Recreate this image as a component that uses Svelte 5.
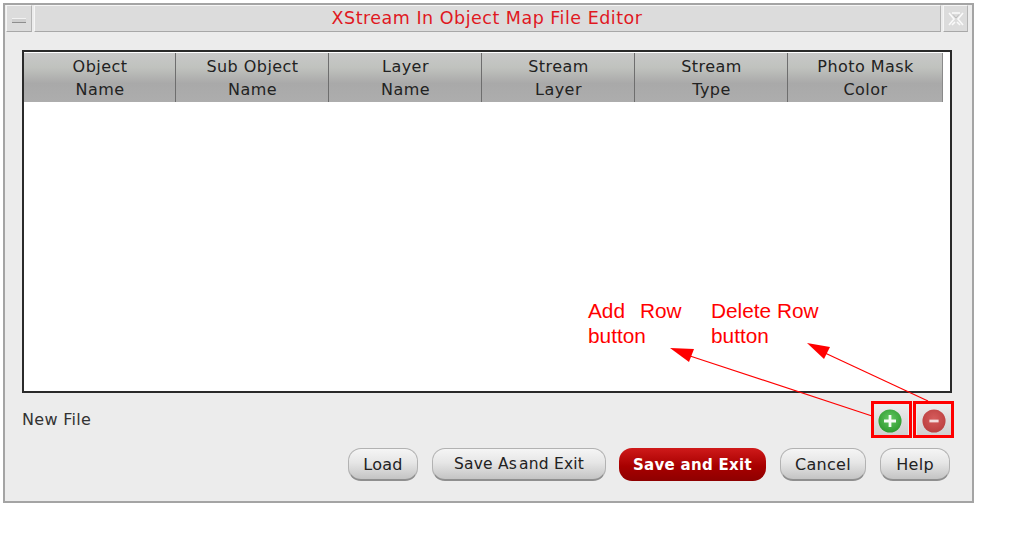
<script>
  const cols = [
    ['Object', 'Name'],
    ['Sub Object', 'Name'],
    ['Layer', 'Name'],
    ['Stream', 'Layer'],
    ['Stream', 'Type'],
    ['Photo Mask', 'Color']
  ];
</script>

<div class="page">
  <div class="window">
    <div class="titlebar">
      <div class="tb-btn min"><span class="dash"></span></div>
      <div class="title">XStream In Object Map File Editor</div>
      <div class="tb-btn close">
        <svg width="18" height="18" viewBox="0 0 18 18" fill="none" stroke="#fafafa" stroke-width="1.6">
          <path d="M2 3 L7 9 L2 15 M5 3 L13 3 M16 3 L11 9 L16 15 M5 15 L8 12 M13 15 L10 12" />
          <path d="M6 4.5 L9 8 L12 4.5" stroke="#bdbdbd" stroke-width="1" />
        </svg>
      </div>
    </div>

    <div class="body">
      <div class="table">
        <div class="thead">
          {#each cols as c}
            <div class="th">{c[0]}<br />{c[1]}</div>
          {/each}
        </div>
      </div>

      <div class="status">
        <span class="file">New File</span>
        <div class="rowbtns">
          <div class="icon-btn plus">
            <svg width="24" height="24" viewBox="0 0 26 26">
              <defs>
                <radialGradient id="g" cx="50%" cy="40%" r="60%">
                  <stop offset="0%" stop-color="#62c862" />
                  <stop offset="100%" stop-color="#2f9a2f" />
                </radialGradient>
                <radialGradient id="r" cx="50%" cy="40%" r="60%">
                  <stop offset="0%" stop-color="#d65c5c" />
                  <stop offset="100%" stop-color="#bb3f3f" />
                </radialGradient>
              </defs>
              <circle cx="13" cy="13" r="12.5" fill="url(#g)" />
              <path d="M13 6.5 V19.5 M6.5 13 H19.5" stroke="#f4fbf4" stroke-width="3" />
            </svg>
          </div>
          <div class="icon-btn">
            <svg width="24" height="24" viewBox="0 0 26 26">
              <circle cx="13" cy="13" r="12.5" fill="url(#r)" />
              <path d="M8 13 H18" stroke="#f3dcdc" stroke-width="3" />
            </svg>
          </div>
        </div>
      </div>

      <div class="actions">
        <button class="btn load">Load</button>
        <button class="btn saveas">Save As<span class="tight">and Exit</span></button>
        <button class="btn primary">Save and Exit</button>
        <button class="btn cancel">Cancel</button>
        <button class="btn help">Help</button>
      </div>
    </div>
  </div>

  <div class="note add">Add<span class="row-word">Row</span><br />button</div>
  <div class="note del">Delete Row<br />button</div>

  <svg class="arrows" width="1017" height="555" viewBox="0 0 1017 555" fill="none">
    <path d="M872 416 L690 356" stroke="#f00" stroke-width="1.2" />
    <polygon points="670,348 694,349 689,362" fill="#f00" />
    <path d="M928 401 L825 353" stroke="#f00" stroke-width="1.2" />
    <polygon points="807,343 830,347 824,359" fill="#f00" />
    <rect x="872.5" y="402.5" width="38" height="34" stroke="#f00" stroke-width="3" />
    <rect x="914.5" y="402.5" width="38" height="34" stroke="#f00" stroke-width="3" />
  </svg>
</div>

<style>
  :global(body) { margin: 0; background: #fff; }
  .page {
    position: relative;
    width: 1017px;
    height: 555px;
    padding: 3px 0 0 3px;
    box-sizing: border-box;
    overflow: hidden;
    font-family: "DejaVu Sans", sans-serif;
  }
  .window {
    width: 971px;
    height: 500px;
    box-sizing: border-box;
    border: 2px solid #a4a4a4;
    background: #ececec;
    display: flex;
    flex-direction: column;
  }
  .titlebar {
    display: flex;
    gap: 2px;
    height: 27px;
    padding: 0 4px 0 1px;
    box-sizing: border-box;
  }
  .tb-btn, .title {
    background: #dcdcdc;
    border-top: 1px solid #f6f6f6;
    border-left: 1px solid #f6f6f6;
    border-bottom: 1px solid #a8a8a8;
    border-right: 1px solid #b4b4b4;
    box-sizing: border-box;
  }
  .tb-btn {
    width: 26px;
    flex: none;
    display: flex;
    align-items: center;
    justify-content: center;
  }
  .close { width: 25px; }
  .dash {
    width: 14px;
    height: 5px;
    margin-top: 3px;
    background: #cfcfcf;
    border-bottom: 1px solid #8e8e8e;
    border-top: 1px solid #f2f2f2;
    box-sizing: border-box;
  }
  .title {
    flex: 1;
    text-align: center;
    color: #e0181f;
    font-size: 17.5px;
    line-height: 25px;
    letter-spacing: 0.5px;
    padding-right: 1px;
  }
  .body {
    flex: 1;
    display: flex;
    flex-direction: column;
    padding: 18px 20px 0 17px;
  }
  .table {
    height: 343px;
    box-sizing: border-box;
    border: 2px solid #2a2a2a;
    background: #fff;
    padding-top: 1px;
  }
  .thead {
    display: flex;
    width: 919px;
    height: 49px;
    background: linear-gradient(#c8c8c8 0%, #c0c2be 30%, #a9a9a9 62%, #adadad 100%);
  }
  .th {
    width: 153px;
    box-sizing: border-box;
    border-right: 1px solid #6e6e6e;
    text-align: center;
    color: #222;
    font-size: 16px;
    line-height: 23px;
    letter-spacing: 0.45px;
    padding: 2px 1px 0 2px;
  }
  .th:first-child { width: 152px; }
  .th:last-child { width: 155px; border-right-color: #8a8a8a; }
  .status {
    display: flex;
    justify-content: space-between;
    align-items: center;
    height: 47px;
    padding-top: 8px;
    box-sizing: border-box;
  }
  .file {
    font-size: 16px;
    letter-spacing: 0.3px;
    color: #333;
    margin-top: -2px;
  }
  .rowbtns {
    display: flex;
    gap: 9px;
    margin-right: 1px;
  }
  .icon-btn {
    width: 34px;
    height: 32px;
    box-sizing: border-box;
    border-radius: 4px;
    background: linear-gradient(#ececec, #cfcfcf);
    display: flex;
    align-items: center;
    justify-content: center;
  }
  .plus { padding-right: 3px; }
  .actions {
    display: flex;
    justify-content: flex-end;
    gap: 14px;
    padding-top: 8px;
    margin-right: 2px;
  }
  .btn {
    height: 33px;
    box-sizing: border-box;
    border: 1px solid #b2b2b2;
    border-bottom: 2px solid #8f8f8f;
    border-radius: 13px;
    background: linear-gradient(#f5f5f5, #e6e6e6 45%, #c4c4c4);
    color: #222;
    font-family: "DejaVu Sans", sans-serif;
    font-size: 16px;
    letter-spacing: 0.3px;
    padding: 0;
  }
  .load { width: 70px; }
  .saveas { width: 174px; margin-right: -1px; font-size: 15.5px; letter-spacing: 0.2px; }
  .tight { margin-left: 2px; }
  .primary {
    width: 147px;
    background: linear-gradient(#cf1a1a, #a80000 55%, #8e0000);
    border: none;
    color: #fff;
    font-weight: 700;
    font-size: 15px;
  }
  .cancel { width: 86px; }
  .help { width: 70px; }
  .note {
    position: absolute;
    color: #f00;
    font-family: "Liberation Sans", sans-serif;
    font-size: 20.8px;
    line-height: 25px;
  }
  .row-word { margin-left: 15px; }
  .add { left: 588px; top: 298px; }
  .del { left: 711px; top: 298px; }
  .arrows { position: absolute; left: 0; top: 0; pointer-events: none; }
</style>
